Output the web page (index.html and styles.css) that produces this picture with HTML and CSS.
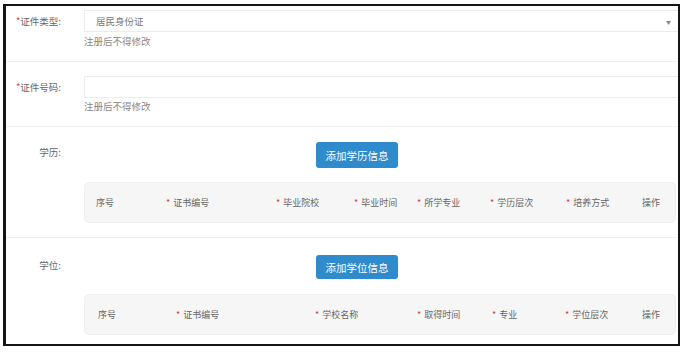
FILE: index.html
```html
<!DOCTYPE html>
<html lang="zh-CN">
<head>
    <meta charset="UTF-8">
    <meta name="viewport" content="width=device-width, initial-scale=1.0">
    <title>证件与学历信息</title>
    <link rel="stylesheet" href="styles.css">
</head>
<body>
    <div class="frame">
        <div class="section sec-type">
            <div class="row">
                <label class="label"><span class="req">*</span>证件类型:</label>
                <div class="field">
                    <div class="select">
                        <span>居民身份证</span>
                        <span class="caret">▼</span>
                    </div>
                    <div class="hint">注册后不得修改</div>
                </div>
            </div>
        </div>

        <div class="section sec-number">
            <div class="row">
                <label class="label"><span class="req">*</span>证件号码:</label>
                <div class="field">
                    <div class="input"></div>
                    <div class="hint">注册后不得修改</div>
                </div>
            </div>
        </div>

        <div class="section sec-edu">
            <div class="row">
                <label class="label label-btn">学历:</label>
                <div class="field">
                    <button class="add-btn">添加学历信息</button>
                    <div class="thead edu">
                        <span>序号</span>
                        <span><i>*</i>证书编号</span>
                        <span><i>*</i>毕业院校</span>
                        <span><i>*</i>毕业时间</span>
                        <span><i>*</i>所学专业</span>
                        <span><i>*</i>学历层次</span>
                        <span><i>*</i>培养方式</span>
                        <span>操作</span>
                    </div>
                </div>
            </div>
        </div>

        <div class="section sec-degree">
            <div class="row">
                <label class="label label-btn">学位:</label>
                <div class="field">
                    <button class="add-btn">添加学位信息</button>
                    <div class="thead degree">
                        <span>序号</span>
                        <span><i>*</i>证书编号</span>
                        <span><i>*</i>学校名称</span>
                        <span><i>*</i>取得时间</span>
                        <span><i>*</i>专业</span>
                        <span><i>*</i>学位层次</span>
                        <span>操作</span>
                    </div>
                </div>
            </div>
        </div>
    </div>
</body>
</html>
```

FILE: styles.css
```css
body {
    margin: 0;
    padding: 4px 0 0 3px;
    background: #fff;
    font-family: "Noto Sans CJK SC", "Noto Sans", sans-serif;
    font-size: 9.5px;
    color: #666;
}
.frame {
    box-sizing: border-box;
    width: 677px;
    height: 342px;
    border: 2px solid #151515;
    border-left-width: 3px;
    overflow: hidden;
    background: #fff;
}
.section {
    border-bottom: 1px solid #f1f1f1;
}
.sec-type {
    padding: 4px 0 14px;
}
.sec-number {
    padding: 14px 0 14px;
}
.sec-edu {
    padding: 15px 0 14px;
}
.sec-degree {
    padding: 17px 0 0;
    border-bottom: none;
}
.row {
    display: flex;
}
.label {
    width: 55px;
    flex-shrink: 0;
    margin-right: 23px;
    text-align: right;
    line-height: 22px;
    color: #666;
}
.label-btn {
    line-height: 20px;
}
.req {
    color: #e03a3a;
}
.field {
    flex: 1;
}
.select, .input {
    box-sizing: border-box;
    height: 22px;
    margin-right: -6px;
    border: 1px solid #ececec;
    display: flex;
    align-items: center;
    justify-content: space-between;
    padding: 0 12px 0 11px;
    color: #777;
}
.caret {
    font-size: 5px;
    color: #888;
}
.hint {
    margin-top: 3px;
    line-height: 12px;
    color: #888;
}
.sec-number .hint {
    margin-top: 2px;
}
.add-btn {
    display: block;
    margin-left: 232px;
    width: 82px;
    height: 26px;
    border: none;
    border-radius: 3px;
    background: #2f8bcc;
    color: #fff;
    font-family: inherit;
    font-size: 10.5px;
    padding: 0;
}
.sec-degree .add-btn {
    height: 24px;
}
.thead {
    box-sizing: border-box;
    display: flex;
    align-items: center;
    height: 41px;
    margin-top: 14px;
    margin-right: 2px;
    border: 1px solid #efefef;
    border-radius: 5px;
    background: #f6f6f6;
    color: #666;
    font-size: 9px;
}
.thead span {
    flex-shrink: 0;
    white-space: nowrap;
}
.thead i {
    font-style: normal;
    color: #e03a3a;
    margin-right: 3px;
}
.thead.edu {
    padding-left: 11px;
}
.edu span:nth-child(1) { width: 70px; }
.edu span:nth-child(2) { width: 110px; }
.edu span:nth-child(3) { width: 78px; }
.edu span:nth-child(4) { width: 63px; }
.edu span:nth-child(5) { width: 73px; }
.edu span:nth-child(6) { width: 76px; }
.edu span:nth-child(7) { width: 76px; }
.thead.degree {
    margin-top: 15px;
    padding-left: 13px;
}
.degree span:nth-child(1) { width: 78px; }
.degree span:nth-child(2) { width: 139px; }
.degree span:nth-child(3) { width: 102px; }
.degree span:nth-child(4) { width: 75px; }
.degree span:nth-child(5) { width: 73px; }
.degree span:nth-child(6) { width: 77px; }
```
